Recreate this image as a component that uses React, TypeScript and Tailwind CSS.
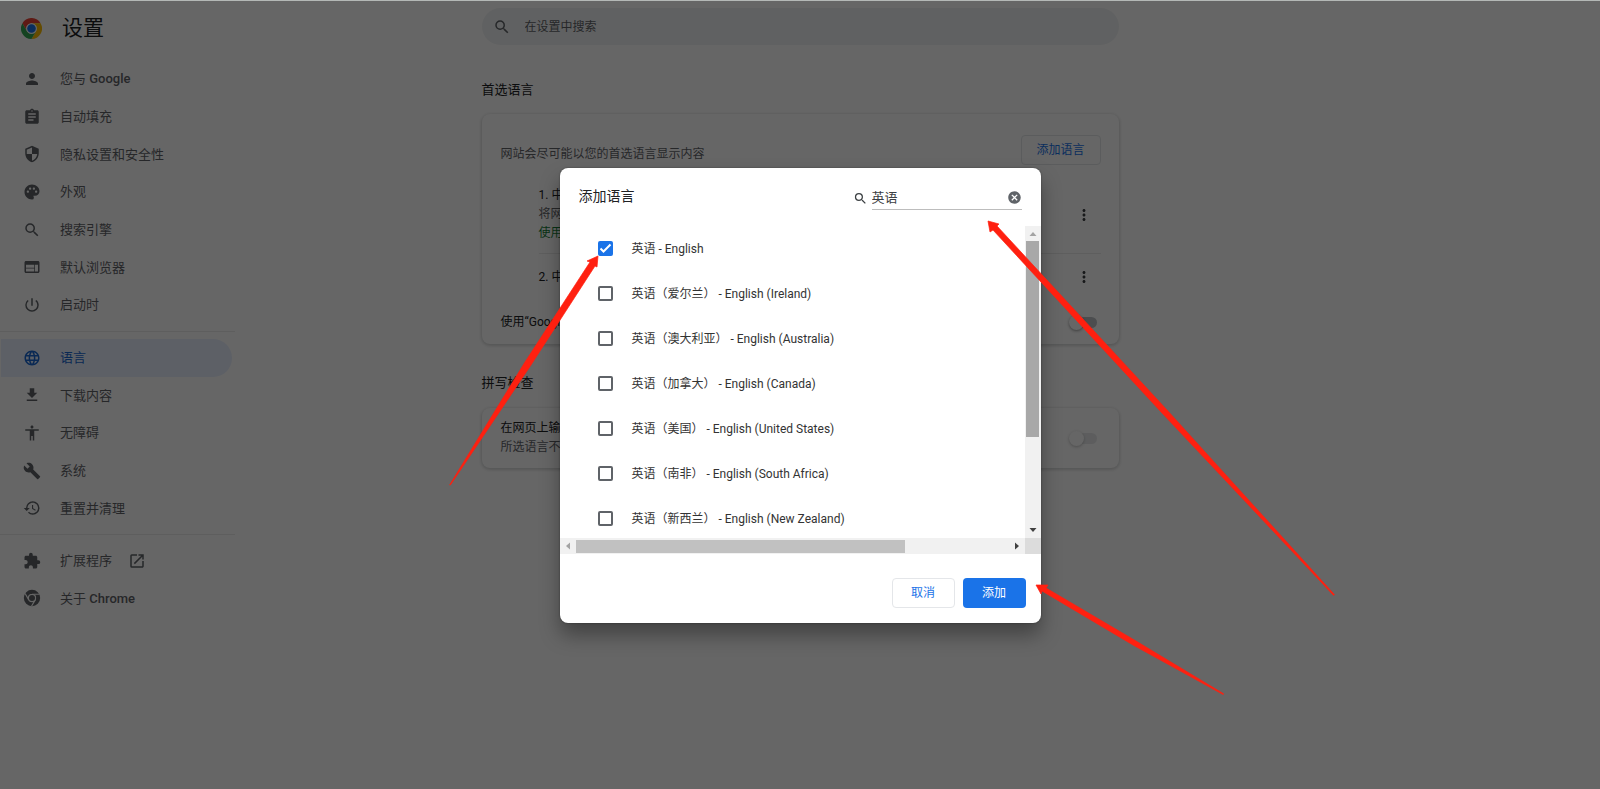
import type { ReactNode } from 'react';
import {
  MdPerson,
  MdAssignment,
  MdSecurity,
  MdPalette,
  MdSearch,
  MdWeb,
  MdPowerSettingsNew,
  MdLanguage,
  MdDownload,
  MdAccessibility,
  MdBuild,
  MdHistory,
  MdExtension,
  MdOpenInNew,
  MdMoreVert,
  MdCancel,
} from 'react-icons/md';

interface NavEntry {
  label: string;
  latin?: string;
  icon: ReactNode;
  active?: boolean;
  external?: boolean;
}

const mainNav: NavEntry[] = [
  { label: '您与', latin: 'Google', icon: <MdPerson /> },
  { label: '自动填充', icon: <MdAssignment /> },
  { label: '隐私设置和安全性', icon: <MdSecurity /> },
  { label: '外观', icon: <MdPalette /> },
  { label: '搜索引擎', icon: <MdSearch /> },
  { label: '默认浏览器', icon: <MdWeb /> },
  { label: '启动时', icon: <MdPowerSettingsNew /> },
];

const advancedNav: NavEntry[] = [
  { label: '语言', icon: <MdLanguage />, active: true },
  { label: '下载内容', icon: <MdDownload /> },
  { label: '无障碍', icon: <MdAccessibility /> },
  { label: '系统', icon: <MdBuild /> },
  { label: '重置并清理', icon: <MdHistory /> },
];

const footerNav: NavEntry[] = [
  { label: '扩展程序', icon: <MdExtension />, external: true },
  { label: '关于', latin: 'Chrome', icon: <ChromeMono /> },
];

const languages = [
  { name: '英语 - English', checked: true },
  { name: '英语（爱尔兰） - English (Ireland)' },
  { name: '英语（澳大利亚） - English (Australia)' },
  { name: '英语（加拿大） - English (Canada)' },
  { name: '英语（美国） - English (United States)' },
  { name: '英语（南非） - English (South Africa)' },
  { name: '英语（新西兰） - English (New Zealand)' },
];

export default function App() {
  return (
    <div className="relative h-screen overflow-hidden bg-white font-['Roboto','Noto_Sans_CJK_SC',sans-serif] text-xs text-[#202124]">
      <div className="flex h-full">
        <Sidebar />
        <Content />
        <div className="flex-1" />
      </div>
      <div className="absolute inset-0 flex items-start justify-center border-t border-[#b4b8b6] bg-black/60 pt-[167px]">
        <AddLanguageDialog />
      </div>
      <Arrows />
    </div>
  );
}

function Sidebar() {
  return (
    <aside className="flex-1">
      <header className="flex h-14 items-center gap-5 pl-[21px]">
        <ChromeLogo />
        <h1 className="text-[21px] leading-7">设置</h1>
      </header>
      <nav className="w-[235px] pt-1">
        <NavGroup items={mainNav} className="h-[264px]" />
        <hr className="my-[7px] border-[#ebebeb]" />
        <NavGroup items={advancedNav} className="h-[188px]" />
        <hr className="my-[7px] border-[#ebebeb]" />
        <NavGroup items={footerNav} className="h-[75px]" />
      </nav>
    </aside>
  );
}

function NavGroup({ items, className }: { items: NavEntry[]; className: string }) {
  return (
    <ul className={`grid auto-rows-fr ${className}`}>
      {items.map((item) => (
        <li key={item.label} className="grid pl-px pr-[3px]">
          <a
            href="#"
            className={`flex items-center rounded-r-full pl-[22px] text-[13px] ${
              item.active ? 'bg-[#e8f0fe] text-[#1967d2]' : 'text-[#5f6368]'
            }`}
          >
            <span className="mr-[19px] text-[18px]">{item.icon}</span>
            <span>
              {item.label}
              {item.latin && <span className="font-medium"> {item.latin}</span>}
            </span>
            {item.external && <MdOpenInNew className="ml-4 text-[18px]" />}
          </a>
        </li>
      ))}
    </ul>
  );
}

function Content() {
  return (
    <main className="w-[637px] pt-2">
      <label className="flex h-[37px] items-center gap-[14px] rounded-full bg-[#f1f3f4] pl-[11px] text-[#5f6368]">
        <MdSearch className="text-[18px]" />
        <input
          type="search"
          aria-label="在设置中搜索"
          placeholder="在设置中搜索"
          className="flex-1 bg-transparent outline-none placeholder:text-[#5f6368]"
        />
      </label>

      <h2 className="mt-[35px] text-[13px] leading-5">首选语言</h2>
      <section className="mt-[14px] h-[230px] rounded-lg pl-[19px] pr-[18px] pt-[21px] shadow-[0_1px_3px_1px_rgba(60,64,67,0.2)]">
        <div className="flex items-start justify-between">
          <p className="pt-[9px] leading-5 text-[#5f6368]">网站会尽可能以您的首选语言显示内容</p>
          <button className="h-[30px] w-20 rounded border border-[#e4e6e9] text-[#1a73e8]">添加语言</button>
        </div>
        <ol className="pl-[38px] pt-[21px]">
          <li className="flex items-center justify-between border-b border-[#ebebeb] pb-[10px]">
            <div className="leading-[19px]">
              <p>1. 中文</p>
              <p className="text-[#5f6368]">将网页</p>
              <p className="text-[#188038]">使用此</p>
            </div>
            <MoreButton />
          </li>
          <li className="flex h-[46px] items-center justify-between">
            <p>2. 中文</p>
            <MoreButton />
          </li>
        </ol>
        <div className="flex h-11 items-center justify-between">
          <p>使用“Google</p>
          <Toggle label="使用“Google" />
        </div>
      </section>

      <h2 className="mt-[29px] text-[13px] leading-5">拼写检查</h2>
      <section className="mt-[15px] flex h-[60px] items-center justify-between rounded-lg pl-[19px] pr-[18px] shadow-[0_1px_3px_1px_rgba(60,64,67,0.2)]">
        <div className="leading-[19px]">
          <p>在网页上输入</p>
          <p className="text-[#5f6368]">所选语言不支</p>
        </div>
        <Toggle label="拼写检查" disabled />
      </section>
    </main>
  );
}

function MoreButton() {
  return (
    <button aria-label="更多操作" className="mr-2 text-[18px] text-[#3c4043]">
      <MdMoreVert />
    </button>
  );
}

function Toggle({ label, disabled }: { label: string; disabled?: boolean }) {
  return (
    <label className={`relative mr-1 flex h-4 w-7 items-center ${disabled ? 'opacity-60' : ''}`}>
      <input type="checkbox" role="switch" aria-label={label} disabled={disabled} className="peer sr-only" />
      <span className={`ml-1 h-[11px] w-6 rounded-full ${disabled ? 'bg-[#dadce0]' : 'bg-[#bdc1c6]'}`} />
      <span className="absolute left-0 size-[15px] rounded-full bg-white shadow-[0_1px_3px_rgba(0,0,0,0.4)]" />
    </label>
  );
}

function AddLanguageDialog() {
  return (
    <div
      role="dialog"
      aria-label="添加语言"
      className="w-[481px] rounded-lg bg-white pb-[15px] shadow-[0_0_2px_rgba(0,0,0,0.4),0_12px_20px_rgba(0,0,0,0.35)]"
    >
      <div className="flex h-[58px] items-start justify-between px-[19px] pt-[18px]">
        <h2 className="text-sm leading-5">添加语言</h2>
        <label className="flex items-center gap-1">
          <MdSearch className="text-[15px] text-[#3c4043]" />
          <span className="flex h-6 w-[150px] items-center border-b border-[#bdbdbd]">
            <input
              type="text"
              aria-label="搜索语言"
              defaultValue="英语"
              className="w-0 flex-1 text-[13px] text-[#3c4043] outline-none"
            />
            <button aria-label="清除搜索" className="text-[15px] text-[#5f6368]">
              <MdCancel />
            </button>
          </span>
        </label>
      </div>

      <div className="grid grid-cols-[1fr_16px]">
        <ul className="h-[312px] overflow-hidden">
          {languages.map((lang) => (
            <li key={lang.name}>
              <label className="flex h-[45px] items-center gap-[19px] pl-[38px]">
                <LanguageCheckbox checked={lang.checked} />
                <span className="whitespace-nowrap text-[#333]">{lang.name}</span>
              </label>
            </li>
          ))}
        </ul>
        <div className="flex flex-col items-center bg-[#f1f1f1]">
          <span className="flex h-[15px] items-center">
            <ScrollArrow className="size-2 text-[#a3a3a3]" />
          </span>
          <span className="h-[196px] w-[13px] bg-[#a8a8a8]" />
          <ScrollArrow className="mb-1 mt-auto size-2 rotate-180 text-[#404040]" />
        </div>
        <div className="flex h-4 items-center bg-[#f1f1f1]">
          <span className="flex w-4 justify-center">
            <ScrollArrow className="size-2 -rotate-90 text-[#a3a3a3]" />
          </span>
          <span className="h-[13px] w-[329px] bg-[#c1c1c1]" />
          <ScrollArrow className="ml-auto mr-1 size-2 rotate-90 text-[#404040]" />
        </div>
        <div className="bg-[#dcdcdc]" />
      </div>

      <div className="flex justify-end gap-2 pr-[15px] pt-6">
        <button className="h-[30px] w-[63px] rounded border border-[#e4e6e9] text-[#1a73e8]">取消</button>
        <button className="h-[30px] w-[63px] rounded bg-[#1a73e8] text-white">添加</button>
      </div>
    </div>
  );
}

function LanguageCheckbox({ checked }: { checked?: boolean }) {
  return (
    <span className="relative size-[15px]">
      <input
        type="checkbox"
        defaultChecked={checked}
        className="peer block size-[15px] appearance-none rounded-[2px] border-2 border-[#5f6368] checked:border-[#1a73e8] checked:bg-[#1a73e8]"
      />
      <svg
        viewBox="0 0 15 15"
        className="pointer-events-none absolute inset-0 hidden fill-none stroke-white stroke-2 peer-checked:block"
      >
        <path d="M2.5 7.5 5.5 10.5l7-7" />
      </svg>
    </span>
  );
}

function ScrollArrow({ className }: { className: string }) {
  return (
    <svg viewBox="0 0 8 8" className={className} fill="currentColor">
      <path d="M4 2 7.5 6h-7z" />
    </svg>
  );
}

function ChromeLogo() {
  return (
    <svg viewBox="0 0 48 48" className="size-[21px]">
      <path d="M3.2 12A24 24 0 0 1 44.8 12H24A12 12 0 0 0 13.6 30z" fill="#ea4335" />
      <path d="M44.8 12A24 24 0 0 1 24 48L34.4 30A12 12 0 0 0 24 12z" fill="#fbbc04" />
      <path d="M24 48A24 24 0 0 1 3.2 12L13.6 30A12 12 0 0 0 34.4 30z" fill="#34a853" />
      <circle cx="24" cy="24" r="12" fill="#fff" />
      <circle cx="24" cy="24" r="9.8" fill="#1a73e8" />
    </svg>
  );
}

function ChromeMono() {
  return (
    <svg viewBox="0 0 24 24" className="size-[18px] fill-none stroke-current">
      <circle cx="12" cy="12" r="8.2" strokeWidth="5.4" />
      <path d="M12 7h10M7.7 14.5 2.8 6M16.3 14.5 11.3 23" stroke="#fff" strokeWidth="1.6" />
      <circle cx="12" cy="12" r="5.4" fill="#fff" stroke="none" />
      <circle cx="12" cy="12" r="4" fill="#5f6368" stroke="none" />
    </svg>
  );
}

function Arrows() {
  return (
    <svg
      viewBox="0 0 1600 789"
      className="pointer-events-none absolute inset-0 size-full fill-[#ff2010] stroke-[#ff2010]"
      strokeWidth="0.7"
    >
      <path d="M598 256 587 261l3 1L525 362 449.6 485h.8L531 365l64-99 2 1z" />
      <path d="M988 221l11 3-2 2 170 184 167.4 184.6-.8.8L1162 413 993 230l-3 2z" />
      <path d="M1036 585l12 0-2 3 90 53 87.6 52.8-.4.8L1133 645l-91-54-1 3z" />
    </svg>
  );
}
